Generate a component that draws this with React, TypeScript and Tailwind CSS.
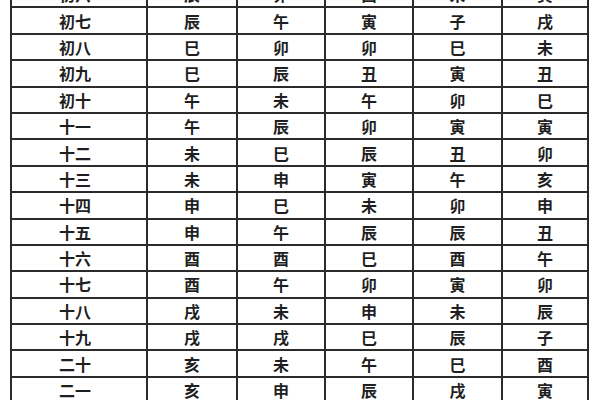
const rows: string[][] = [
  ["初六", "辰", "卯", "酉", "未", "寅"],
  ["初七", "辰", "午", "寅", "子", "戌"],
  ["初八", "巳", "卯", "卯", "巳", "未"],
  ["初九", "巳", "辰", "丑", "寅", "丑"],
  ["初十", "午", "未", "午", "卯", "巳"],
  ["十一", "午", "辰", "卯", "寅", "寅"],
  ["十二", "未", "巳", "辰", "丑", "卯"],
  ["十三", "未", "申", "寅", "午", "亥"],
  ["十四", "申", "巳", "未", "卯", "申"],
  ["十五", "申", "午", "辰", "辰", "丑"],
  ["十六", "酉", "酉", "巳", "酉", "午"],
  ["十七", "酉", "午", "卯", "寅", "卯"],
  ["十八", "戌", "未", "申", "未", "辰"],
  ["十九", "戌", "戌", "巳", "辰", "子"],
  ["二十", "亥", "未", "午", "巳", "酉"],
  ["二一", "亥", "申", "辰", "戌", "寅"],
];

const widths = ["w-[136px]", "w-[90px]", "w-[88px]", "w-[88px]", "w-[89px]", "w-[86px]"];

export default function App() {
  return (
    <div className="h-[400px] w-[600px] overflow-hidden bg-white pl-[10px] font-['Noto_Sans_CJK_SC',sans-serif]">
      <table className="-mt-[20px] w-[579px] table-fixed border-collapse">
        <tbody>
          {rows.map((row, i) => (
            <tr key={i} className="h-[26.4px]">
              {row.map((cell, j) => (
                <td
                  key={j}
                  className={`${widths[j]} border-2 border-[#2b2b2b] p-0 text-center text-[16px] font-semibold leading-none text-[#1f1f1f] ${j === 0 ? "pr-[8px]" : ""}`}
                >
                  {cell}
                </td>
              ))}
            </tr>
          ))}
        </tbody>
      </table>
    </div>
  );
}
